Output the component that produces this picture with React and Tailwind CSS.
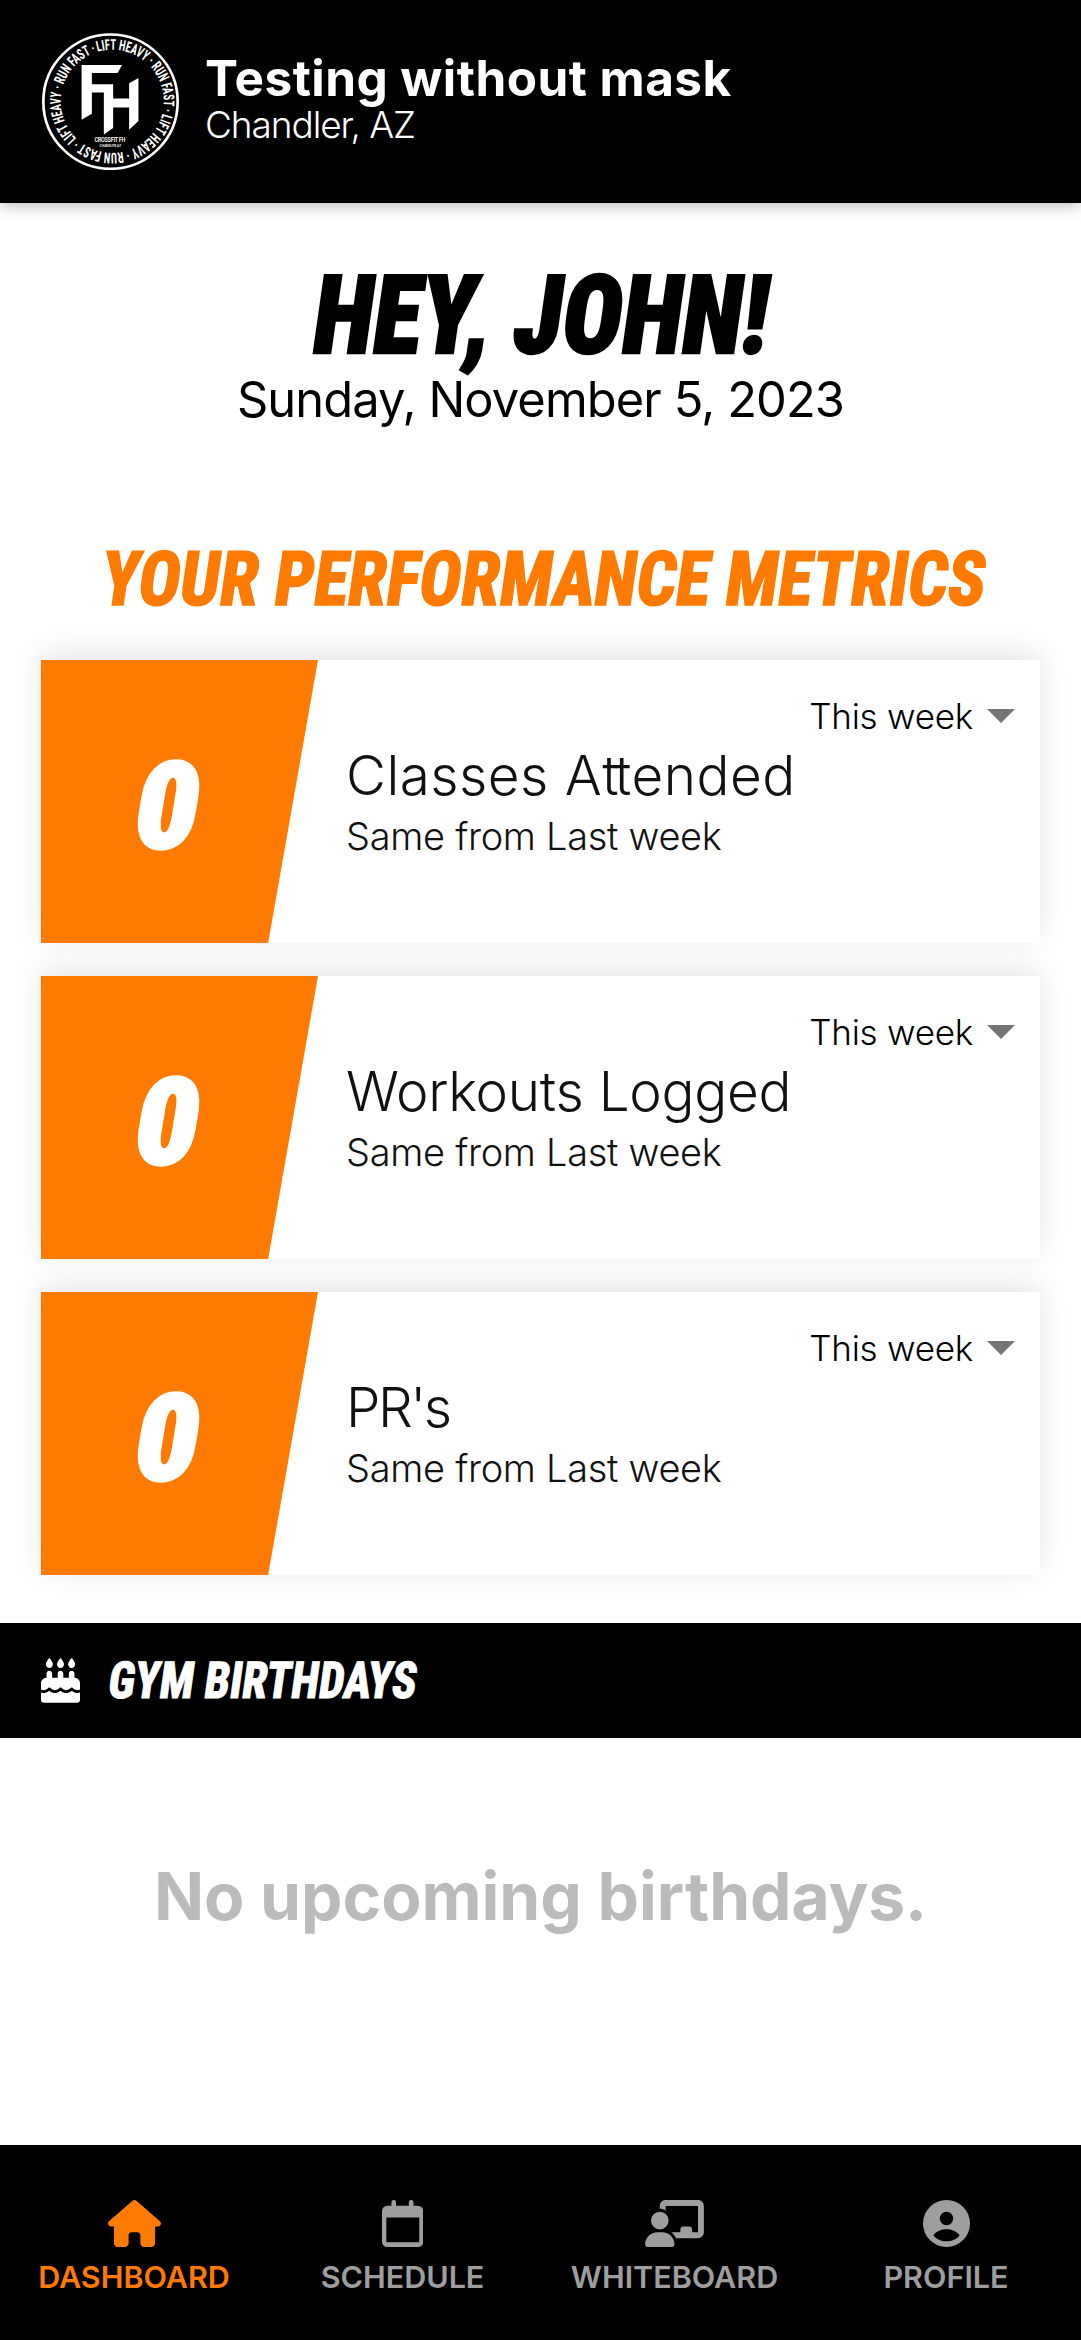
import React from "react";
import { FaCakeCandles, FaChalkboardUser, FaHouse } from "react-icons/fa6";

const metrics = [
  { value: "0", title: <>Classes A<span className="tracking-[-3.5px]">t</span>tended</>, tracking: "tracking-[0.500px]" },
  { value: "0", title: "Workouts Logged", tracking: "tracking-[-0.250px]" },
  { value: "0", title: "PR's", tracking: "tracking-[-2.500px]" },
];

function GymLogo() {
  return (
    <svg viewBox="34 38 412 412" className="size-[137px] shrink-0">
      <defs>
        <path id="ring" d="M201.2 94.8A155 155 0 1 1 200.2 95.1" />
      </defs>
      <circle cx="240" cy="244.500" r="202" fill="none" stroke="#fff" strokeWidth="8" />
      <text
        fill="#fff"
        className="font-['Roboto_Condensed',sans-serif] text-[45px] font-bold"
        style={{ whiteSpace: "pre" }}
      >
        <textPath href="#ring" textLength="968" lengthAdjust="spacingAndGlyphs">
          LIFT HEAVY · RUN FAST · LIFT HEAVY · RUN FAST · LIFT HEAVY · RUN FAST ·
        </textPath>
      </text>
      <path
        fill="#fff"
        d="M153 134H275L261 158H184V192H248V235H296V189L324 173V303L296 329V262H248V324L220 343V217H184V281L153 299Z"
      />
      <text x="192" y="366" textLength="93" fill="#fff" className="font-['Roboto_Condensed',sans-serif] text-[19px] font-medium">
        CROSSFIT FH
      </text>
      <text x="207" y="381" textLength="65" fill="#fff" className="font-['Roboto_Condensed',sans-serif] text-[11px] font-medium">
        CHANDLER AZ
      </text>
    </svg>
  );
}

function CalendarIcon() {
  return (
    <svg viewBox="37 30 123 140" className="h-[47px]" fill="currentColor">
      <path
        fillRule="evenodd"
        d="M65 47V37a7 7 0 0 1 14 0V47H117V37a7 7 0 0 1 14 0V47H144a16 16 0 0 1 16 16V154a16 16 0 0 1-16 16H53a16 16 0 0 1-16-16V63a16 16 0 0 1 16-16ZM50 82V156H148V82Z"
      />
    </svg>
  );
}

function ProfileIcon() {
  return (
    <svg viewBox="42 30 140 140" className="h-[47px]" fill="currentColor">
      <path
        fillRule="evenodd"
        d="M112 30a70 70 0 1 0 0 140a70 70 0 1 0 0-140ZM112 65a20 20 0 1 1 0 40a20 20 0 1 1 0-40ZM73 135C82 122 98 117 112 117S142 122 151 135C142 147 128 153 112 153S82 147 73 135Z"
      />
    </svg>
  );
}

function MetricCard({ value, title, tracking }) {
  return (
    <article className="flex h-[283px] bg-white shadow-[0_-6px_28px_rgba(0,0,0,0.11)]">
      <div className="flex w-[277px] shrink-0 items-start bg-[#ff7a00] pt-[83px] pl-[95px] [clip-path:polygon(0_0,100%_0,82%_100%,0_100%)]">
        <span className="origin-left scale-x-[1.040] -skew-x-[9deg] font-['Roboto_Condensed',sans-serif] text-[121px] leading-[128px] font-black text-white [-webkit-text-stroke:3px_white]">
          {value}
        </span>
      </div>
      <div className="flex-1 pt-[34px] pl-[28px] font-light text-[#111]">
        <div className="flex items-center justify-end gap-[14px] pr-[25px] text-[35px] leading-[44px] tracking-[-0.250px] text-black">
          This week
          <svg viewBox="0 0 28 14" className="h-3.5 w-7" fill="#757575">
            <path d="M0 0H28L14 14Z" />
          </svg>
        </div>
        <h3 className={`text-[54.800px] leading-[74px] ${tracking}`}>{title}</h3>
        <p className="text-[37.900px] leading-[48px] tracking-[-0.26px]">Same from Last week</p>
      </div>
    </article>
  );
}

function NavItem({ icon, label, active }) {
  return (
    <a className={`flex flex-col items-center ${active ? "text-[#ff7a00]" : "text-[#9e9e9e]"}`}>
      {icon}
      <span className="mt-[10px] text-[30.500px] leading-[40px] font-semibold">{label}</span>
    </a>
  );
}

export default function App() {
  return (
    <div className="flex h-[2340px] w-[1081px] flex-col overflow-hidden bg-white font-['Inter',sans-serif] text-black">
      <header className="flex h-[203px] shrink-0 items-start gap-[26px] bg-black pt-[33px] pl-[42px] text-white shadow-[0_3px_14px_rgba(0,0,0,0.26)]">
        <GymLogo />
        <div className="pt-5">
          <h1 className="text-[49.500px] leading-[50px] font-bold tracking-[0.450px]">Testing without mask</h1>
          <p className="text-[37px] leading-[43px] font-[350] tracking-[-1.080px]">Chandler, AZ</p>
        </div>
      </header>

      <main className="flex flex-1 flex-col">
        <section className="flex flex-col items-center pt-[67px]">
          <h2 className="translate-x-[1px] translate-y-[1px] scale-x-[0.900] -skew-x-[9deg] font-['Roboto_Condensed',sans-serif] text-[109.500px] leading-[90px] font-black [-webkit-text-stroke:2.5px_black]">
            HEY, JOHN!
          </h2>
          <p className="text-[48.800px] leading-[80px] tracking-[-0.880px]">Sunday, November 5, 2023</p>
        </section>

        <section className="flex flex-col px-[41px] pt-[99px]">
          <h2 className="translate-x-[4px] self-center scale-x-[0.914] -skew-x-[9deg] font-['Roboto_Condensed',sans-serif] text-[75.600px] leading-[80px] font-extrabold whitespace-nowrap text-[#ff7a00] [-webkit-text-stroke:1.5px_#ff7a00]">
            YOUR PERFORMANCE METRICS
          </h2>
          <div className="mt-[41px] flex flex-col gap-[33px]">
            {metrics.map((m, i) => (
              <MetricCard key={i} {...m} />
            ))}
          </div>
        </section>

        <section className="mt-[48px]">
          <div className="flex h-[115px] items-center gap-[29px] bg-black pl-[41px] text-white">
            <FaCakeCandles className="h-[45px] w-[39px]" />
            <h2 className="origin-left scale-x-[0.885] -skew-x-[9deg] font-['Roboto_Condensed',sans-serif] text-[51px] leading-none font-extrabold [-webkit-text-stroke:1px_white]">
              GYM BIRTHDAYS
            </h2>
          </div>
          <p className="pt-[118px] text-center text-[65.800px] leading-[80px] font-bold tracking-[0px] text-[#bbb]">
            No upcoming birthdays.
          </p>
        </section>
      </main>

      <nav className="grid h-[195px] shrink-0 grid-cols-[268px_269px_275px_268px] bg-black pt-[55px]">
        <NavItem active label="DASHBOARD" icon={<FaHouse className="h-[47px] w-[53px]" />} />
        <NavItem label="SCHEDULE" icon={<CalendarIcon />} />
        <NavItem label="WHITEBOARD" icon={<FaChalkboardUser className="h-[47px] w-[59px]" />} />
        <NavItem label="PROFILE" icon={<ProfileIcon />} />
      </nav>
    </div>
  );
}
